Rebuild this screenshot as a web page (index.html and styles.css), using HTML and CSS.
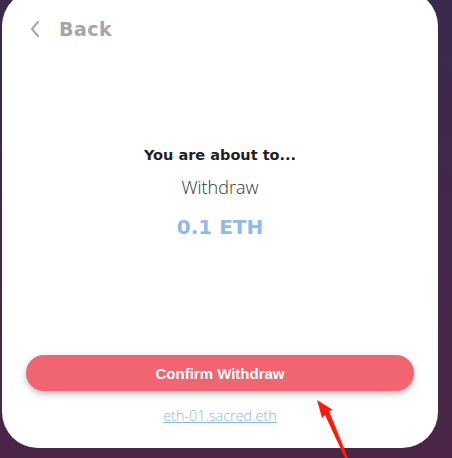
FILE: index.html
```html
<!DOCTYPE html>
<html lang="en">
<head>
    <meta charset="UTF-8">
    <meta name="viewport" content="width=device-width, initial-scale=1.0">
    <title>Confirm Withdraw</title>
    <link rel="stylesheet" href="styles.css">
</head>
<body>
    <div class="card">
        <div class="header">
            <svg class="back-icon" width="12" height="18" viewBox="0 0 12 18">
                <path d="M9 2 L3 9 L9 16" fill="none" stroke="#a6a6a6" stroke-width="2" stroke-linecap="round" stroke-linejoin="round"/>
            </svg>
            <span class="back-text">Back</span>
        </div>

        <div class="summary">
            <div class="title">You are about to...</div>
            <div class="action">Withdraw</div>
            <div class="amount">0.1 ETH</div>
        </div>

        <div class="footer">
            <button class="confirm">Confirm Withdraw</button>
            <a class="ens" href="#">eth-01.sacred.eth</a>
        </div>
    </div>

    <!-- red annotation arrow -->
    <svg class="annotation" width="40" height="62" viewBox="0 0 40 62">
        <polygon points="4,2 20,12 16,13 35,60 32,60 12,17 9,20" fill="#ff1a0a"/>
    </svg>
</body>
</html>
```

FILE: styles.css
```css
/* Page */
body {
    margin: 0;
    height: 458px;
    overflow: hidden;
    background: linear-gradient(to bottom, #3a2a4c, #4b2546);
    font-family: "Open Sans", Arial, sans-serif;
    position: relative;
}

.card {
    width: 436px;
    height: 458px;
    margin: -10px 0 0 2px;
    background: #fff;
    border-radius: 36px;
    box-sizing: border-box;
    padding: 25px 24px 0 24px;
    display: flex;
    flex-direction: column;
}

.header {
    display: flex;
    align-items: center;
    gap: 18px;
    height: 28px;
    padding-left: 3px;
}

.back-icon {
    display: block;
}

.back-text {
    font-family: "DejaVu Sans", sans-serif;
    font-weight: bold;
    font-size: 19px;
    color: #a6a6a6;
    letter-spacing: 0.5px;
}

.summary {
    display: flex;
    flex-direction: column;
    align-items: center;
    margin-top: 104px;
}

.title {
    font-family: "DejaVu Sans", sans-serif;
    font-weight: bold;
    font-size: 14.5px;
    color: #1f1f1f;
}

.action {
    margin-top: 12px;
    font-family: "Open Sans", sans-serif;
    font-weight: 300;
    font-size: 18px;
    color: #333;
}

.amount {
    margin-top: 16px;
    font-family: "DejaVu Sans", sans-serif;
    font-weight: bold;
    font-size: 20px;
    color: #8dbce9;
}

.footer {
    margin-top: auto;
    padding-bottom: 23px;
    display: flex;
    flex-direction: column;
    align-items: center;
}

.confirm {
    width: 388px;
    height: 36px;
    border: none;
    border-radius: 18px;
    background: #f0656f;
    color: #fff;
    font-family: "Liberation Sans", Arial, sans-serif;
    font-weight: bold;
    font-size: 15px;
    box-shadow: 0 3px 6px rgba(0, 0, 0, 0.25);
    cursor: pointer;
}

.ens {
    margin-top: 15px;
    font-family: "Open Sans", sans-serif;
    font-weight: 300;
    font-size: 14.4px;
    color: #86b8e8;
    text-decoration: underline;
}

.annotation {
    position: absolute;
    left: 313px;
    top: 398px;
}
```
